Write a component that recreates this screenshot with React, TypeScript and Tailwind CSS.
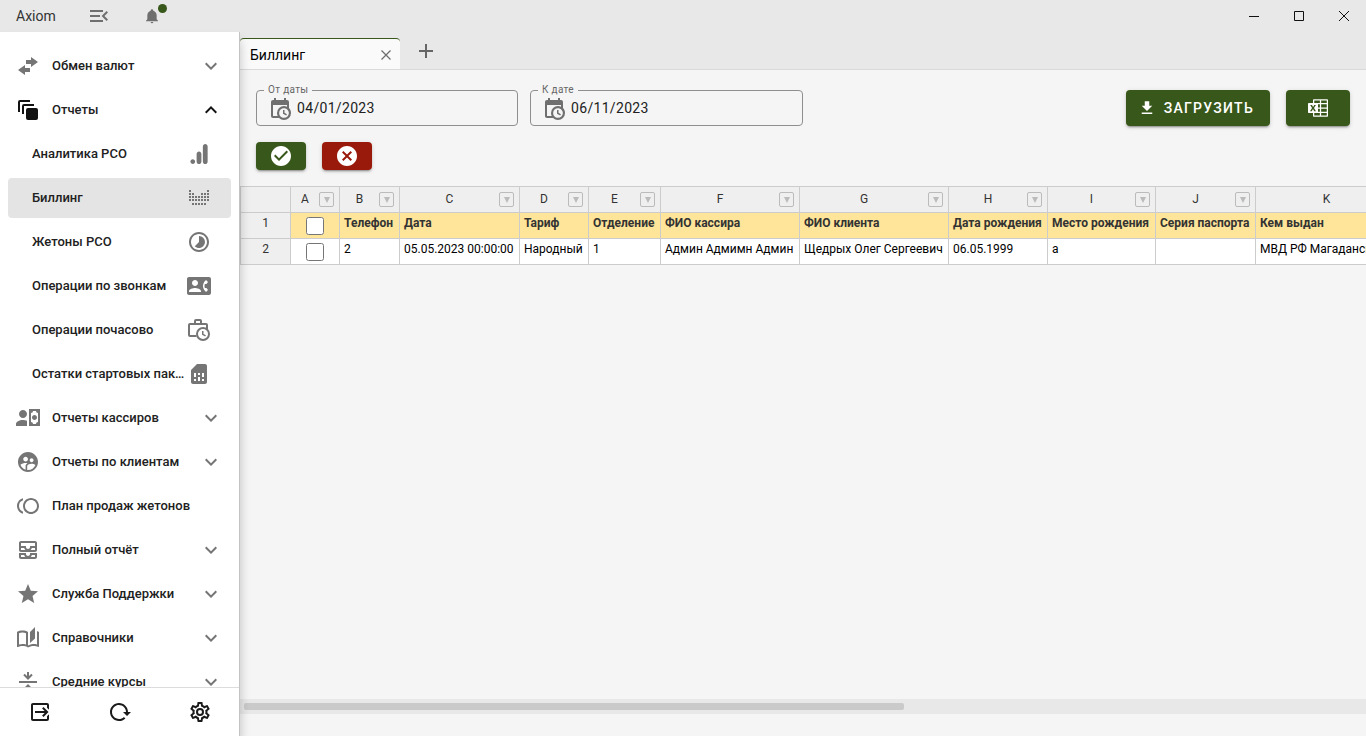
import type { ReactNode } from "react";
import {
  MdContactPhone,
  MdOutlineAllInbox,
  MdSimCard,
  MdStar,
  MdSupervisedUserCircle,
  MdTimelapse,
  MdToll,
} from "react-icons/md";

const paths = {
  menuOpen:
    "M21,15.61L19.59,17L14.58,12L19.59,7L21,8.39L17.44,12L21,15.61M3,6H16V8H3V6M3,13V11H13V13H3M3,18V16H16V18H3Z",
  bell: "M21,19V20H3V19L5,17V11C5,7.9 7.03,5.17 10,4.29C10,4.19 10,4.1 10,4A2,2 0 0,1 12,2A2,2 0 0,1 14,4C14,4.1 14,4.19 14,4.29C16.97,5.17 19,7.9 19,11V17L21,19M14,21A2,2 0 0,1 12,23A2,2 0 0,1 10,21",
  swap: "M22 8l-7-5v3h-5v4h5v3zM2 16l7 5v-3h5v-4H9v-3z",
  analytics:
    "M15.86,4.39V19.39C15.86,21.06 17,22 18.25,22C19.39,22 20.64,21.21 20.64,19.39V4.5C20.64,2.96 19.5,2 18.25,2C17,2 15.86,3.06 15.86,4.39M9.61,12V19.39C9.61,21.07 10.77,22 12,22C13.14,22 14.39,21.21 14.39,19.39V12.11C14.39,10.57 13.25,9.61 12,9.61C10.75,9.61 9.61,10.67 9.61,12M5.75,17.23C7.07,17.23 8.14,18.3 8.14,19.61C8.14,20.93 7.07,22 5.75,22A2.39,2.39 0 0,1 3.36,19.61C3.36,18.3 4.43,17.23 5.75,17.23Z",
  accountCash:
    "M11 8C11 10.21 9.21 12 7 12C4.79 12 3 10.21 3 8C3 5.79 4.79 4 7 4C9.21 4 11 5.79 11 8M11 14.72V20H0V18C0 15.79 3.13 14 7 14C8.5 14 9.87 14.27 11 14.72M24 20H13V3H24V20M16 11.5C16 12.88 17.12 14 18.5 14C19.88 14 21 12.88 21 11.5C21 10.12 19.88 9 18.5 9C17.12 9 16 10.12 16 11.5M22 7C20.9 7 20 6.11 20 5H17C17 6.11 16.1 7 15 7V16C16.11 16 17 16.9 17 18H20C20 16.9 20.9 16 22 16V7Z",
  book: "M19 1L14 6V17L19 12.5V1M21 5V18.5C19.9 18.15 18.7 18 17.5 18C15.8 18 13.35 18.65 12 19.5V6C10.55 4.9 8.45 4.5 6.5 4.5C4.55 4.5 2.45 4.9 1 6V20.65C1 20.9 1.25 21.15 1.5 21.15C1.6 21.15 1.65 21.1 1.75 21.1C3.1 20.45 5.05 20 6.5 20C8.45 20 10.55 20.4 12 21.5C13.35 20.65 15.8 20 17.5 20C19.15 20 20.85 20.3 22.25 21.05C22.35 21.1 22.4 21.1 22.5 21.1C22.75 21.1 23 20.85 23 20.6V6C22.4 5.55 21.75 5.25 21 5M10 18.41C8.75 18.09 7.5 18 6.5 18C5.44 18 4.18 18.19 3 18.5V7.13C3.91 6.73 5.14 6.5 6.5 6.5C7.86 6.5 9.09 6.73 10 7.13V18.41Z",
  chevronDown: "M7.41,8.58L12,13.17L16.59,8.58L18,10L12,16L6,10L7.41,8.58Z",
  chevronUp: "M7.41,15.41L12,10.83L16.59,15.41L18,14L12,8L6,14L7.41,15.41Z",
  logout:
    "M14.08,15.59L16.67,13H7V11H16.67L14.08,8.41L15.5,7L20.5,12L15.5,17L14.08,15.59M19,3A2,2 0 0,1 21,5V9.67L19,7.67V5H5V19H19V16.33L21,14.33V19A2,2 0 0,1 19,21H5C3.89,21 3,20.1 3,19V5C3,3.89 3.89,3 5,3H19Z",
  reload:
    "M2 12C2 16.97 6.03 21 11 21C13.39 21 15.68 20.06 17.4 18.4L15.9 16.9C14.63 18.25 12.86 19 11 19C4.76 19 1.64 11.46 6.05 7.05C10.46 2.64 18 5.77 18 12H15L19 16H19.1L23 12H20C20 7.03 15.97 3 11 3C6.03 3 2 7.03 2 12Z",
  cog: "M12,8A4,4 0 0,1 16,12A4,4 0 0,1 12,16A4,4 0 0,1 8,12A4,4 0 0,1 12,8M12,10A2,2 0 0,0 10,12A2,2 0 0,0 12,14A2,2 0 0,0 14,12A2,2 0 0,0 12,10M10,22C9.75,22 9.54,21.82 9.5,21.58L9.13,18.93C8.5,18.68 7.96,18.34 7.44,17.94L4.95,18.95C4.73,19.03 4.46,18.95 4.34,18.73L2.34,15.27C2.21,15.05 2.27,14.78 2.46,14.63L4.57,12.97L4.5,12L4.57,11L2.46,9.37C2.27,9.22 2.21,8.95 2.34,8.73L4.34,5.27C4.46,5.05 4.73,4.96 4.95,5.05L7.44,6.05C7.96,5.66 8.5,5.32 9.13,5.07L9.5,2.42C9.54,2.18 9.75,2 10,2H14C14.25,2 14.46,2.18 14.5,2.42L14.87,5.07C15.5,5.32 16.04,5.66 16.56,6.05L19.05,5.05C19.27,4.96 19.54,5.05 19.66,5.27L21.66,8.73C21.79,8.95 21.73,9.22 21.54,9.37L19.43,11L19.5,12L19.43,13L21.54,14.63C21.73,14.78 21.79,15.05 21.66,15.27L19.66,18.73C19.54,18.95 19.27,19.04 19.05,18.95L16.56,17.95C16.04,18.34 15.5,18.68 14.87,18.93L14.5,21.58C14.46,21.82 14.25,22 14,22H10M11.25,4L10.88,6.61C9.68,6.86 8.62,7.5 7.85,8.39L5.44,7.35L4.69,8.65L6.8,10.2C6.4,11.37 6.4,12.64 6.8,13.8L4.68,15.36L5.43,16.66L7.86,15.62C8.63,16.5 9.68,17.14 10.87,17.38L11.24,20H12.76L13.13,17.39C14.32,17.14 15.37,16.5 16.14,15.62L18.57,16.66L19.32,15.36L17.2,13.81C17.6,12.64 17.6,11.37 17.2,10.2L19.31,8.65L18.56,7.35L16.15,8.39C15.38,7.5 14.32,6.86 13.12,6.62L12.75,4H11.25Z",
  calendarClock:
    "M15,13H16.5V15.82L18.94,17.23L18.19,18.53L15,16.69V13M19,8H5V19H9.67C9.24,18.09 9,17.07 9,16A7,7 0 0,1 16,9C17.07,9 18.09,9.24 19,9.67V8M5,21C3.89,21 3,20.1 3,19V5C3,3.89 3.89,3 5,3H6V1H8V3H16V1H18V3H19A2,2 0 0,1 21,5V11.1C22.24,12.36 23,14.09 23,16A7,7 0 0,1 16,23C14.09,23 12.36,22.24 11.1,21H5M16,11.15A4.85,4.85 0 0,0 11.15,16C11.15,18.68 13.32,20.85 16,20.85A4.85,4.85 0 0,0 20.85,16C20.85,13.32 18.68,11.15 16,11.15Z",
  checkCircle:
    "M12 2C6.5 2 2 6.5 2 12S6.5 22 12 22 22 17.5 22 12 17.5 2 12 2M10 17L5 12L6.41 10.59L10 14.17L17.59 6.58L19 8L10 17Z",
  closeCircle:
    "M12,2C17.53,2 22,6.47 22,12C22,17.53 17.53,22 12,22C6.47,22 2,17.53 2,12C2,6.47 6.47,2 12,2M15.59,7L12,10.59L8.41,7L7,8.41L10.59,12L7,15.59L8.41,17L12,13.41L15.59,17L17,15.59L13.41,12L17,8.41L15.59,7Z",
  download: "M5,20H19V18H5M19,9H15V3H9V9H5L12,16L19,9Z",
  excel:
    "M21.17 3.25Q21.5 3.25 21.76 3.5 22 3.74 22 4.08V19.92Q22 20.26 21.76 20.5 21.5 20.75 21.17 20.75H7.83Q7.5 20.75 7.24 20.5 7 20.26 7 19.92V17H2.83Q2.5 17 2.24 16.76 2 16.5 2 16.17V7.83Q2 7.5 2.24 7.24 2.5 7 2.83 7H7V4.08Q7 3.74 7.24 3.5 7.5 3.25 7.83 3.25M7 13.06L8.18 15.28H9.97L8 12.06L9.93 8.89H8.22L7.13 10.9L7.09 10.96L7.06 11.03Q6.8 10.5 6.5 9.96 6.25 9.43 5.97 8.89H4.16L6.05 12.08L4 15.28H5.78M13.88 19.5V17H8.25V19.5M13.88 15.75V12.63H12V15.75M13.88 11.38V8.25H12V11.38M13.88 7V4.5H8.25V7M20.75 19.5V17H15.13V19.5M20.75 15.75V12.63H15.13V15.75M20.75 11.38V8.25H15.13V11.38M20.75 7V4.5H15.13V7Z",
  plus: "M19,13H13V19H11V13H5V11H11V5H13V11H19V13Z",
};

function Glyph({ d, className = "size-6" }: { d: string; className?: string }) {
  return (
    <svg viewBox="0 0 24 24" className={className} fill="currentColor" aria-hidden="true">
      <path d={d} />
    </svg>
  );
}

function StackIcon() {
  return (
    <svg viewBox="0 0 24 24" className="size-6" aria-hidden="true">
      <path d="M14 3H4a1 1 0 0 0-1 1v10M18 7H8a1 1 0 0 0-1 1v8" fill="none" stroke="currentColor" strokeWidth="2" />
      <rect x="10" y="10" width="12" height="12" rx="2" fill="currentColor" />
    </svg>
  );
}

const dotRows = [
  { y: 4, cells: "1000001" },
  { y: 7, cells: "1100111" },
  { y: 10, cells: "1111111" },
  { y: 13, cells: "1111111" },
  { y: 17, cells: "0111110" },
];

function DotsIcon() {
  return (
    <svg viewBox="0 0 24 24" className="size-6" fill="currentColor" aria-hidden="true">
      {dotRows.flatMap((row) =>
        row.cells
          .split("")
          .map((on, x) =>
            on === "1" ? <rect key={`${x}-${row.y}`} x={2 + x * 3} y={row.y} width="2" height="2" /> : null,
          ),
      )}
    </svg>
  );
}

function BriefcaseClockIcon() {
  return (
    <svg viewBox="0 0 24 24" className="size-6" fill="none" stroke="currentColor" strokeWidth="2" aria-hidden="true">
      <path d="M9.5 18H3a1 1 0 0 1-1-1V7a1 1 0 0 1 1-1h16a1 1 0 0 1 1 1v4.5M8 6V3a1 1 0 0 1 1-1h4a1 1 0 0 1 1 1v3" />
      <circle cx="16" cy="16" r="6" />
      <path d="M15.75 13v3.3l2.8 1.6" strokeWidth="1.5" />
    </svg>
  );
}

function CollapseIcon() {
  return (
    <svg viewBox="0 0 24 24" className="size-6" fill="none" stroke="currentColor" strokeWidth="2" aria-hidden="true">
      <path d="M3 12h18M12 2v6M8 4.500l4 4 4-4M12 22v-6M8 19.500l4-4 4 4" />
    </svg>
  );
}

type Item = { label: string; icon: ReactNode; chevron?: "up" | "down"; child?: boolean; active?: boolean };

const items: Item[] = [
  { label: "Обмен валют", icon: <Glyph d={paths.swap} />, chevron: "down" },
  { label: "Отчеты", icon: <StackIcon />, chevron: "up" },
  { label: "Аналитика РСО", icon: <Glyph d={paths.analytics} />, child: true },
  { label: "Биллинг", icon: <DotsIcon />, child: true, active: true },
  { label: "Жетоны РСО", icon: <MdTimelapse className="size-6" />, child: true },
  { label: "Операции по звонкам", icon: <MdContactPhone className="size-6" />, child: true },
  { label: "Операции почасово", icon: <BriefcaseClockIcon />, child: true },
  { label: "Остатки стартовых пакетов", icon: <MdSimCard className="size-6" />, child: true },
  { label: "Отчеты кассиров", icon: <Glyph d={paths.accountCash} />, chevron: "down" },
  { label: "Отчеты по клиентам", icon: <MdSupervisedUserCircle className="size-6" />, chevron: "down" },
  { label: "План продаж жетонов", icon: <MdToll className="size-6" /> },
  { label: "Полный отчёт", icon: <MdOutlineAllInbox className="size-6" />, chevron: "down" },
  { label: "Служба Поддержки", icon: <MdStar className="size-6" />, chevron: "down" },
  { label: "Справочники", icon: <Glyph d={paths.book} />, chevron: "down" },
  { label: "Средние курсы", icon: <CollapseIcon />, chevron: "down" },
];

function SidebarItem({ item }: { item: Item }) {
  const open = item.chevron === "up";
  if (item.child) {
    return (
      <a
        href="#"
        className={`flex h-10 shrink-0 items-center rounded pr-5 pl-6 text-[#757575] ${item.active ? "bg-[#e4e4e4]" : ""}`}
      >
        <span className="min-w-0 flex-1 truncate text-[#212121]">{item.label}</span>
        {item.icon}
      </a>
    );
  }
  return (
    <a
      href="#"
      className={`flex h-10 shrink-0 items-center rounded px-2 ${open ? "text-[#121212]" : "text-[#757575]"}`}
    >
      {item.icon}
      <span className="ml-3 min-w-0 flex-1 truncate text-[#212121]">{item.label}</span>
      {item.chevron && <Glyph d={open ? paths.chevronUp : paths.chevronDown} />}
    </a>
  );
}

function DateField({ id, label, value, className }: { id: string; label: string; value: string; className: string }) {
  return (
    <fieldset className={`h-[43px] rounded border border-[#8f8f8f] px-[7px] tracking-[0.02em] ${className}`}>
      <legend className="px-1 text-[10px] leading-[14px] text-[#666]">
        <label htmlFor={id}>{label}</label>
      </legend>
      <div className="flex items-center gap-[5px] pl-1 text-[#6f6f6f]">
        <Glyph d={paths.calendarClock} className="size-6 shrink-0" />
        <input
          id={id}
          type="text"
          defaultValue={value}
          className="h-6 w-full min-w-0 bg-transparent pb-[3px] text-sm text-[#212121] outline-none"
        />
      </div>
    </fieldset>
  );
}

const columns = [
  { letter: "A", width: "w-[49px]", title: "", value: "" },
  { letter: "B", width: "w-[60px]", title: "Телефон", value: "2" },
  { letter: "C", width: "w-[120px]", title: "Дата", value: "05.05.2023 00:00:00" },
  { letter: "D", width: "w-[69px]", title: "Тариф", value: "Народный" },
  { letter: "E", width: "w-[72px]", title: "Отделение", value: "1" },
  { letter: "F", width: "w-[139px]", title: "ФИО кассира", value: "Админ Адмимн Админ" },
  { letter: "G", width: "w-[149px]", title: "ФИО клиента", value: "Щедрых Олег Сергеевич" },
  { letter: "H", width: "w-[99px]", title: "Дата рождения", value: "06.05.1999" },
  { letter: "I", width: "w-[108px]", title: "Место рождения", value: "а" },
  { letter: "J", width: "w-[100px]", title: "Серия паспорта", value: "" },
  { letter: "K", width: "w-[162px]", title: "Кем выдан", value: "МВД РФ Магаданской" },
];

function Sheet() {
  return (
    <table className="w-[1178px] table-fixed border-collapse">
      <thead>
        <tr className="h-[26px]">
          <th className="w-[50px] border border-[#ccc] bg-[#efefef] p-0" aria-label="№" />
          {columns.map((c) => (
            <th
              key={c.letter}
              scope="col"
              className={`border border-[#ccc] bg-[#efefef] p-0 text-xs leading-4 font-normal text-[#333] ${c.width}`}
            >
              <div className="flex h-[25px] items-center pr-[5px]">
                <span className="flex-1 pb-0.5 text-center">{c.letter}</span>
                <button
                  type="button"
                  aria-label={`Фильтр ${c.letter}`}
                  className="flex size-[15px] items-center justify-center rounded-xs border border-[#bbb] text-[#bbb]"
                >
                  <svg viewBox="0 0 6 6" className="size-[6px]" fill="currentColor" aria-hidden="true">
                    <path d="M0 0h6L3 6z" />
                  </svg>
                </button>
              </div>
            </th>
          ))}
        </tr>
      </thead>
      <tbody>
        {[1, 2].map((n) => (
          <tr key={n} className="h-[26px]">
            <th
              scope="row"
              className="border border-[#ccc] bg-[#efefef] p-0 pb-1.5 text-center text-xs leading-4 font-normal text-[#333]"
            >
              {n}
            </th>
            {columns.map((c, i) => (
              <td
                key={c.letter}
                className={`overflow-hidden border border-[#ccc] p-0 text-xs whitespace-nowrap ${
                  n === 1 ? "bg-[#ffe599] font-bold text-[#333]" : "bg-white text-black"
                }`}
              >
                {i === 0 ? (
                  <input type="checkbox" aria-label={`Строка ${n}`} className="mx-auto mt-px block size-[18px]" />
                ) : (
                  <div className="px-1 pb-1.5">{n === 1 ? c.title : c.value}</div>
                )}
              </td>
            ))}
          </tr>
        ))}
      </tbody>
    </table>
  );
}

const raised = "shadow-[0_3px_1px_-2px_rgba(0,0,0,0.2),0_2px_2px_rgba(0,0,0,0.14),0_1px_5px_rgba(0,0,0,0.12)]";

const footerActions = [
  { label: "Выйти", d: paths.logout },
  { label: "Обновить", d: paths.reload },
  { label: "Настройки", d: paths.cog },
];

export default function App() {
  return (
    <div className="flex h-screen flex-col overflow-hidden bg-[#f5f5f5] font-[Roboto,sans-serif] text-[#212121]">
      <header className="flex h-8 shrink-0 items-center bg-[#e8e8e8] pl-4">
        <span className="w-[71px] text-sm text-[#333]">Axiom</span>
        <button type="button" aria-label="Меню" className="text-[#6f6f6f]">
          <Glyph d={paths.menuOpen} />
        </button>
        <button type="button" aria-label="Уведомления" className="relative ml-8 p-px text-[#6f6f6f]">
          <Glyph d={paths.bell} className="size-4" />
          <span className="absolute -top-[3px] -right-[6px] size-[9px] rounded-full bg-[#38571a]" />
        </button>
        <div className="ml-auto flex text-[#111]">
          <button type="button" aria-label="Свернуть" className="flex h-8 w-[45px] items-center justify-center">
            <svg viewBox="0 0 10 10" className="size-[10px]" stroke="currentColor" aria-hidden="true">
              <path d="M0 5.500h10" />
            </svg>
          </button>
          <button type="button" aria-label="Развернуть" className="flex h-8 w-[45px] items-center justify-center">
            <svg viewBox="0 0 10 10" className="size-[10px]" fill="none" stroke="currentColor" aria-hidden="true">
              <path d="M.5.5h9v9h-9z" />
            </svg>
          </button>
          <button type="button" aria-label="Закрыть" className="flex h-8 w-[45px] items-center justify-center">
            <svg viewBox="0 0 10 10" className="size-[10px]" stroke="currentColor" aria-hidden="true">
              <path d="M0 0l10 10M10 0L0 10" />
            </svg>
          </button>
        </div>
      </header>

      <div className="flex min-h-0 flex-1">
        <aside className="relative z-10 flex w-60 shrink-0 flex-col border-r border-[#c4c4c4] bg-white shadow-[0_8px_10px_rgba(0,0,0,0.22)]">
          <nav className="flex min-h-0 flex-1 flex-col gap-1 overflow-hidden px-2 pt-[14px] text-[13px] font-medium">
            {items.map((item) => (
              <SidebarItem key={item.label} item={item} />
            ))}
          </nav>
          <div className="flex h-[49px] shrink-0 items-center border-t border-[#dcdcdc] text-[#1a1a1a]">
            {footerActions.map((action) => (
              <button
                key={action.label}
                type="button"
                aria-label={action.label}
                className="flex w-20 shrink-0 justify-center"
              >
                <Glyph d={action.d} />
              </button>
            ))}
          </div>
        </aside>

        <main className="flex min-w-0 flex-1 flex-col">
          <div className="flex h-[38px] shrink-0 items-end border-b border-[#dadada] bg-[#e8e8e8]">
            <div className="flex h-[31px] w-40 items-center justify-between rounded-t border-t border-[#38571a] bg-[#fafafa] pt-0.5 pr-[6px] pl-[10px] text-sm text-black">
              Биллинг
              <button type="button" aria-label="Закрыть вкладку" className="text-[#6f6f6f]">
                <svg viewBox="0 0 16 16" className="size-4" stroke="currentColor" strokeWidth="1.300" aria-hidden="true">
                  <path d="M3.500 3.500l9 9M12.500 3.500l-9 9" />
                </svg>
              </button>
            </div>
            <button type="button" aria-label="Новая вкладка" className="mb-[6px] ml-[14px] text-[#666]">
              <Glyph d={paths.plus} />
            </button>
          </div>

          <div className="flex shrink-0 items-end px-4 pt-[13px]">
            <DateField id="date-from" label="От даты" value="04/01/2023" className="w-[262px]" />
            <DateField id="date-to" label="К дате" value="06/11/2023" className="ml-3 w-[273px]" />
            <button
              type="button"
              className={`ml-auto flex h-9 items-center gap-2 rounded bg-[#38571a] pr-4 pl-3 text-sm font-medium tracking-[0.09em] text-white ${raised}`}
            >
              <Glyph d={paths.download} className="size-[18px]" />
              ЗАГРУЗИТЬ
            </button>
            <button
              type="button"
              aria-label="Экспорт в Excel"
              className={`ml-4 flex h-9 w-16 items-center justify-center rounded bg-[#38571a] text-white ${raised}`}
            >
              <Glyph d={paths.excel} />
            </button>
          </div>

          <div className="flex shrink-0 gap-4 px-4 pt-4 pb-4">
            <button
              type="button"
              aria-label="Принять"
              className={`flex h-7 w-[50px] items-center justify-center rounded bg-[#38571a] text-white ${raised}`}
            >
              <Glyph d={paths.checkCircle} />
            </button>
            <button
              type="button"
              aria-label="Отклонить"
              className={`flex h-7 w-[50px] items-center justify-center rounded bg-[#99190a] text-white ${raised}`}
            >
              <Glyph d={paths.closeCircle} />
            </button>
          </div>

          <div className="min-h-0 flex-1 overflow-hidden">
            <Sheet />
          </div>
          <div className="mb-[22px] flex h-[15px] shrink-0 items-center bg-[#e8e8e8] px-1" aria-hidden="true">
            <div className="h-[7px] w-[59%] rounded-xs bg-[#cacaca]" />
          </div>
        </main>
      </div>
    </div>
  );
}
